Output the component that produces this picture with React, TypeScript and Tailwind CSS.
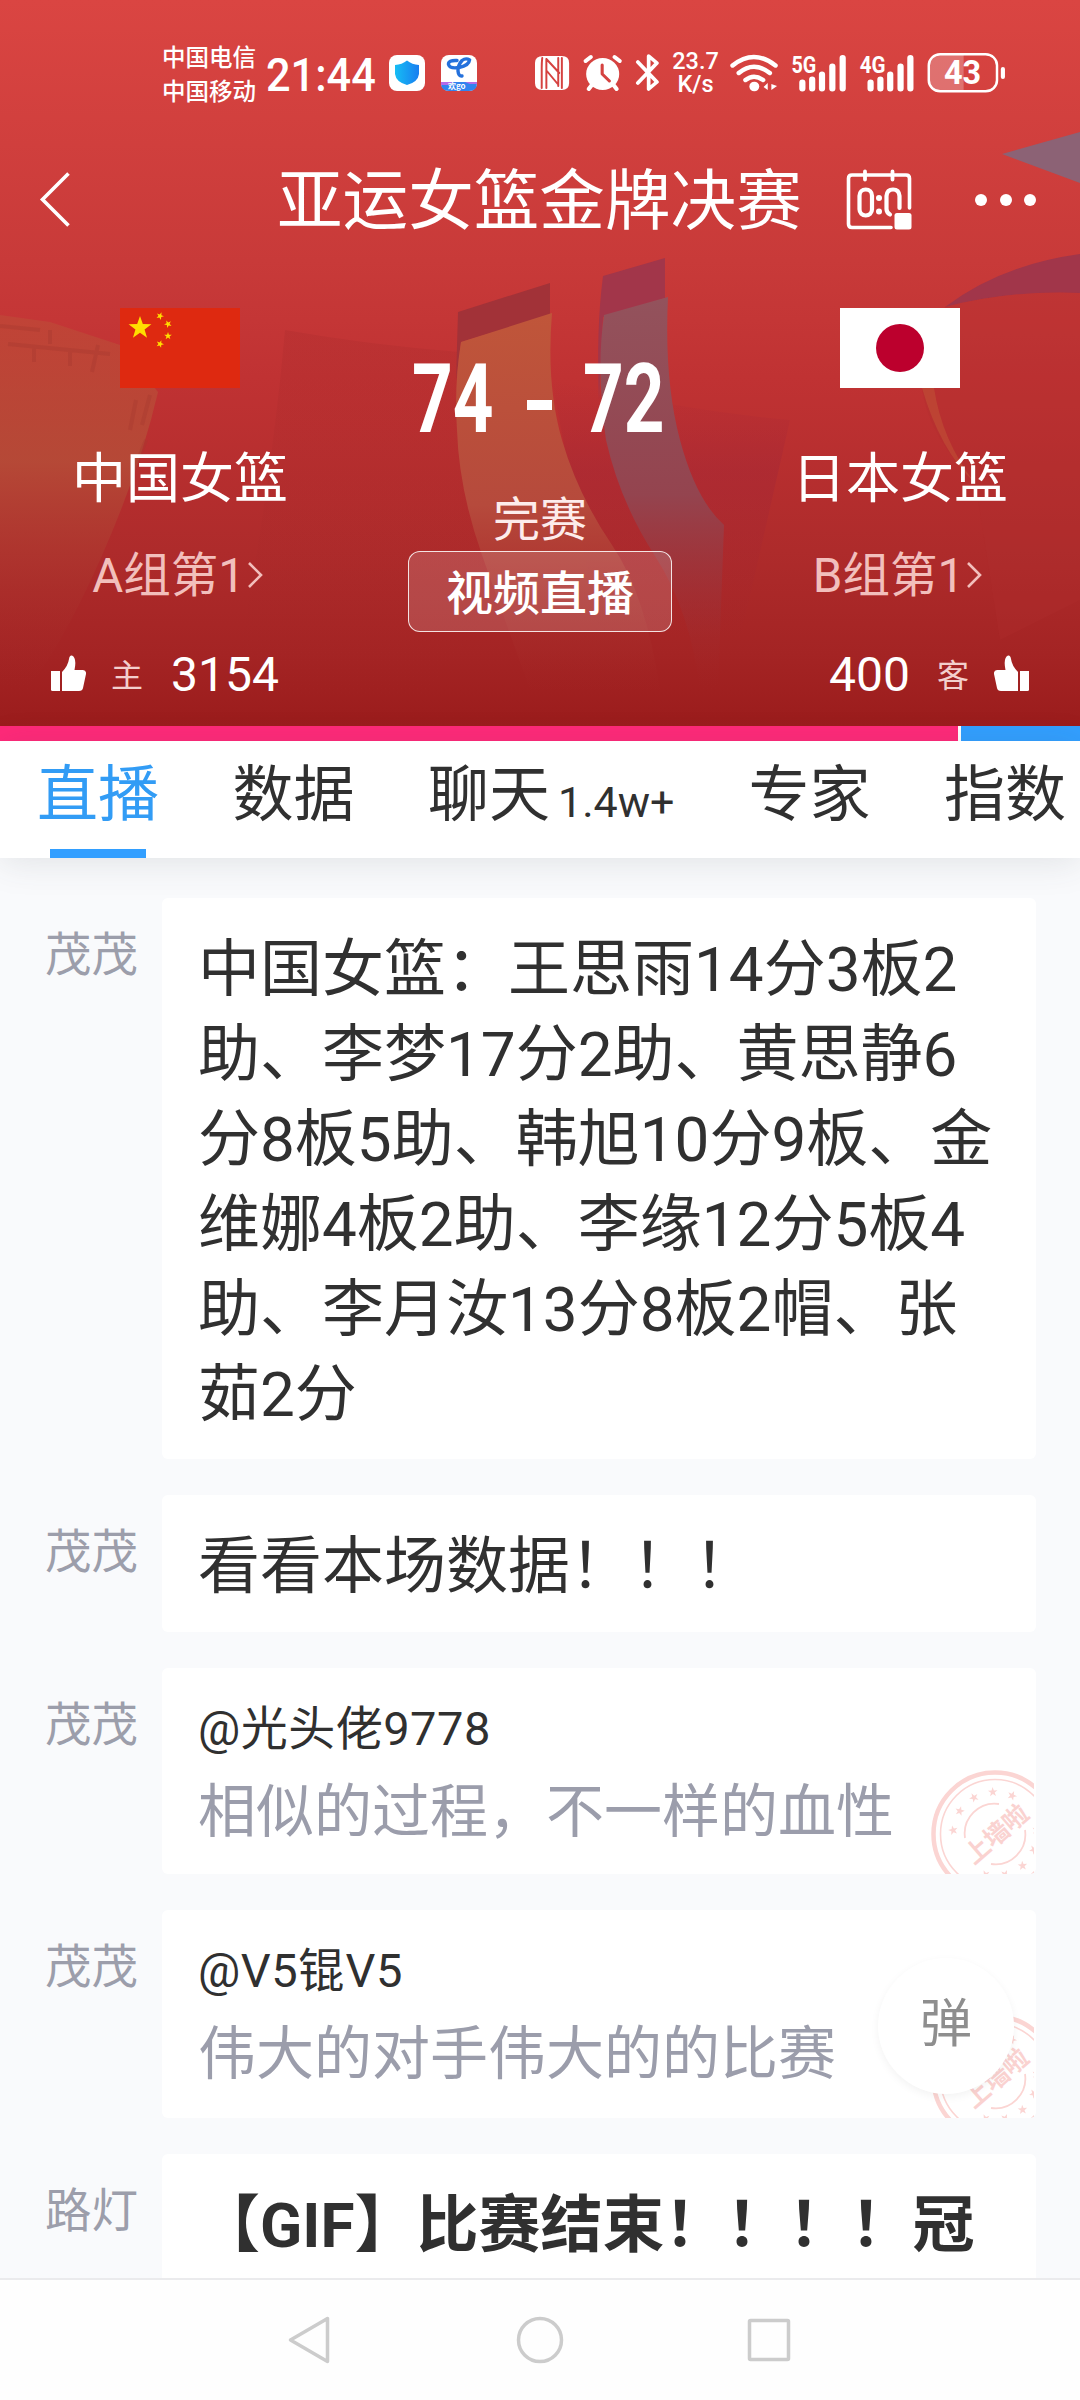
import type { ReactNode } from "react";

const TABS = [
    { label: "直播", active: true },
    { label: "数据" },
    { label: "聊天", count: "1.4w+" },
    { label: "专家" },
    { label: "指数" },
];

function cx(...c: Array<string | false | undefined | null>) {
    return c.filter(Boolean).join(" ");
}

export default function App() {
    return (
        <div className="relative flex h-[2400px] w-[1080px] flex-col overflow-hidden bg-white font-['Noto_Sans_CJK_SC',sans-serif] text-[#303030]">
            <header className="relative h-[726px] shrink-0 overflow-hidden bg-[linear-gradient(to_bottom,#da4542_0%,#c83a39_36%,#c03233_52%,#ae2b2b_76%,#a42424_90%,#9b1c1c_100%)] text-white">
                <HeaderArt />
                <div className="relative">
                    <StatusBar />
                    <TitleBar />
                    <div className="grid h-[387px] grid-cols-3">
                        <Team name="中国女篮" rank="A组第1" flag={<ChinaFlag />} />
                        <div className="flex flex-col items-center pt-[98px]">
                            <div className="flex h-24 items-center font-[Roboto,sans-serif] text-[96px] leading-none font-bold">
                                <span className="w-[83px] pl-px">
                                    <span className="inline-block origin-left scale-x-[0.74]">74</span>
                                </span>
                                <span className="mt-3 mr-[30px] ml-[33px] h-[10px] w-[25px] bg-white" />
                                <span className="w-[87px] pl-px">
                                    <span className="inline-block origin-left scale-x-[0.74]">72</span>
                                </span>
                            </div>
                            <div className="mt-[45px] text-[47px] leading-none text-[#fdeceb]">完赛</div>
                            <button className="mt-3 flex h-[81px] w-[264px] items-center justify-center rounded-xl border border-white/85 bg-white/15 pb-[4px] text-[47px] leading-none font-medium">
                                视频直播
                            </button>
                        </div>
                        <Team name="日本女篮" rank="B组第1" flag={<JapanFlag />} />
                    </div>
                    <div className="flex h-[66px] items-center justify-between px-[50px] leading-none">
                        <div className="flex items-center">
                            <Thumb />
                            <span className="ml-[25px] text-[32px] text-[#f3cfcd]">主</span>
                            <span className="ml-[28px] pt-[4px] font-[Roboto,sans-serif] text-[48px]">3154</span>
                        </div>
                        <div className="flex items-center">
                            <span className="pt-[4px] font-[Roboto,sans-serif] text-[48px]">400</span>
                            <span className="ml-[27px] text-[32px] text-[#f3cfcd]">客</span>
                            <Thumb className="ml-[25px] -scale-x-100" />
                        </div>
                    </div>
                </div>
            </header>

            {/* Support ratio */}
            <div className="flex h-[15px] shrink-0 gap-[3px]">
                <div className="w-[958px] bg-[#ff2979]" />
                <div className="flex-1 bg-[#329fff]" />
            </div>

            <nav className="relative z-10 flex h-[117px] shrink-0 bg-white pl-[37px] shadow-[0_4px_34px_rgba(60,70,80,0.13)]">
                {TABS.map((tab) => (
                    <div key={tab.label} className="mr-[73.5px] flex shrink-0 flex-col items-center">
                        <div className="flex h-[108px] items-start pt-[18px] leading-none">
                            <span className={cx("text-[61px]", tab.active && "text-[#329cf5]")}>{tab.label}</span>
                            {tab.count && (
                                <span className="ml-[8px] w-[117px] pt-[22px] font-[Roboto,sans-serif] text-[43px]">{tab.count}</span>
                            )}
                        </div>
                        {tab.active && <div className="h-[9px] w-24 bg-[#329fff]" />}
                    </div>
                ))}
            </nav>

            <main className="flex h-[1420px] shrink-0 flex-col gap-9 overflow-hidden bg-[#f9fafc] pt-[40px]">
                <Message author="茂茂" className="h-[561px] pr-[38px]">
                    中国女篮：王思雨14分3板2助、李梦17分2助、黄思静6分8板5助、韩旭10分9板、金维娜4板2助、李缘12分5板4助、李月汝13分8板2帽、张茹2分
                </Message>
                <Message author="茂茂" className="h-[137px]">
                    看看本场数据！！！
                </Message>
                <Message author="茂茂" className="h-[206px]">
                    <Reply user="@光头佬9778" text="相似的过程，不一样的血性" />
                </Message>
                <Message author="茂茂" className="h-[208px]">
                    <Reply user="@V5锟V5" text="伟大的对手伟大的的比赛" />
                </Message>
                <Message author="路灯" className="h-[200px] font-bold">
                    【GIF】比赛结束！！！！冠
                </Message>
            </main>

            <button className="absolute top-[1958px] left-[878px] z-10 flex h-[136px] w-[136px] items-center justify-center rounded-full bg-white pb-[12px] text-[52px] leading-none text-[#8e8e8e] shadow-[0_3px_8px_rgba(0,0,0,0.05)]">
                弹
            </button>

            <footer className="flex h-[122px] shrink-0 justify-center border-t-2 border-[#ebebed] bg-[#fefefe] pt-[35px]">
                <svg width="504" height="50" viewBox="288 2315 504 50" fill="none" stroke="#cccccc" strokeWidth="3.5" strokeLinejoin="round">
                    <path d="M290.5 2340 327.5 2318.500V2361.500Z" />
                    <circle cx="540" cy="2340" r="21.500" />
                    <rect x="749.5" y="2320.500" width="39" height="39" rx="1" />
                </svg>
            </footer>
        </div>
    );
}

function HeaderArt() {
    return (
        <svg className="absolute inset-0" width="1080" height="726" viewBox="0 0 1080 726">
            <defs>
                <linearGradient id="orange" x1="0" y1="310" x2="0" y2="700" gradientUnits="userSpaceOnUse">
                    <stop offset="0" stopColor="#c0563a" />
                    <stop offset="0.5" stopColor="#b64a3c" />
                    <stop offset="1" stopColor="#a32526" stopOpacity="0" />
                </linearGradient>
                <linearGradient id="mauve" x1="0" y1="300" x2="0" y2="690" gradientUnits="userSpaceOnUse">
                    <stop offset="0" stopColor="#93525c" />
                    <stop offset="0.5" stopColor="#94444f" />
                    <stop offset="1" stopColor="#a32526" stopOpacity="0" />
                </linearGradient>
                <linearGradient id="wall" x1="0" y1="310" x2="0" y2="690" gradientUnits="userSpaceOnUse">
                    <stop offset="0" stopColor="#bd5038" stopOpacity="0.5" />
                    <stop offset="0.4" stopColor="#b54d38" stopOpacity="0.85" />
                    <stop offset="1" stopColor="#a32526" stopOpacity="0" />
                </linearGradient>
                <linearGradient id="shade" x1="0" y1="330" x2="0" y2="700" gradientUnits="userSpaceOnUse">
                    <stop offset="0" stopColor="#a52a2b" stopOpacity="0.25" />
                    <stop offset="1" stopColor="#a32526" stopOpacity="0" />
                </linearGradient>
                <linearGradient id="between" x1="0" y1="380" x2="0" y2="640" gradientUnits="userSpaceOnUse">
                    <stop offset="0" stopColor="#9f2438" stopOpacity="0" />
                    <stop offset="0.35" stopColor="#9f2438" stopOpacity="0.35" />
                    <stop offset="1" stopColor="#9f2430" stopOpacity="0" />
                </linearGradient>
            </defs>
            <path d="M285 330Q370 345 460 352L500 600 420 700H230Q270 500 285 330Z" fill="url(#shade)" />
            <path d="M552 380Q680 410 790 420L740 640H600Z" fill="url(#between)" />
            <path d="M0 315 50 322 120 345 158 392Q140 470 100 560T20 700L0 710Z" fill="url(#wall)" />
            <path d="M0 326 40 330M8 344 110 354M50 330V344M34 346V362M70 350V366M98 345 92 372M150 395 142 425M146 440 134 470M136 400 130 430" stroke="#a83a30" strokeWidth="4" opacity="0.4" fill="none" />
            <path d="M458 312 550 283V315L461 342 456 380Z" fill="#a23238" />
            <path d="M461 342 552 313Q546 385 562 440T612 545 660 690H530Q505 620 482 555T457 430Q454 385 461 342Z" fill="url(#orange)" />
            <path d="M603 276 665 258V298L603 317 599 400Q596 330 603 276Z" fill="#a2364a" />
            <path d="M604 315 668 297Q664 380 680 440T724 525L718 690H700Q690 610 655 556T606 440Q596 370 604 315Z" fill="url(#mauve)" />
            <path d="M1002 154 1080 132V183Z" fill="#8c6275" />
            <path d="M945 307Q1000 265 1080 254V293Q1010 290 945 307Z" fill="#a1364a" />
            <path d="M945 307Q1010 290 1080 293V600L1000 640 975 480Q930 440 922 389Z" fill="#b0302f" opacity="0.3" />
            <path d="M922 388H934Q942 440 974 482 940 450 922 388Z" fill="#bf4c35" opacity="0.7" />
        </svg>
    );
}

function StatusBar() {
    return (
        <div className="flex h-[146px] items-center pl-[162px]">
            <div className="w-[104px] shrink-0 text-[23.5px] leading-[34px] font-medium">
                <div>中国电信</div>
                <div>中国移动</div>
            </div>
            <div className="w-[123px] shrink-0 pt-[3px] font-[Roboto,sans-serif] text-[46px] leading-none font-medium">
                <span className="inline-block origin-left scale-x-[0.94]">21:44</span>
            </div>
            <svg className="shrink-0" width="88" height="36" viewBox="389 56 88 36">
                <defs>
                    <linearGradient id="shield" x1="0" x2="1">
                        <stop stopColor="#16bdf4" />
                        <stop offset="1" stopColor="#187ef0" />
                    </linearGradient>
                </defs>
                <rect x="389" y="56" width="36" height="36" rx="8" fill="#fff" />
                <path d="M407 61.500Q412 65.500 419 66V75Q418 83 407 86 396 83 395 75V66Q402 65.500 407 61.500Z" fill="url(#shield)" />
                <rect x="441" y="56" width="36" height="36" rx="8" fill="#fff" />
                <path d="M441 83H477V84Q477 92 469 92H449Q441 92 441 84Z" fill="#3183ef" />
                <path d="M441 83H453L448 86H441ZM465 83H477V85H470Z" fill="#b46be8" />
                <path d="M457 61.500Q448 61 448.500 65.500 450 70 459 68.500 469 66.500 469.500 61 466 58.500 462 61.500 458 66 458 72 458.500 77.500 462 77" fill="none" stroke="#2471dc" strokeWidth="3.400" strokeLinecap="round" />
                <text x="448" y="89.500" fontSize="8" fontWeight="700" fill="#fff">
                    欢go
                </text>
            </svg>
            <svg className="ml-[58px] shrink-0" width="124" height="42" viewBox="534 52 120 42" preserveAspectRatio="none" fill="none" stroke="#fff" strokeLinecap="round" strokeLinejoin="round">
                {/* NFC */}
                <path d="M542 56H560Q567 56 567 63V83Q567 90 560 90H541Q534 90 534 83V63Q534 56 542 56Z" fill="#fff" stroke="none" />
                <path d="M541 58Q540.500 62 540.500 68V88M560 58V88M545 59 557.500 73M545.500 71 556 84M545 59V88M556.500 58V86" stroke="#d54240" strokeWidth="1.900" />
                {/* Alarm */}
                <circle cx="599.500" cy="74" r="16" fill="#fff" stroke="none" />
                <path d="M583 61 588 57M616 61 611 57M589 85 586 89M610 85 613 89" strokeWidth="4" />
                <path d="M599 65V74L606 81" stroke="#d54240" strokeWidth="3" />
                {/* Bluetooth */}
                <path d="M633.500 62 652 82 644 89V56L652 63 633.500 83" strokeWidth="3.600" />
            </svg>
            <div className="ml-[13px] w-[47px] shrink-0 text-center font-[Roboto,sans-serif] text-[23.5px] leading-[23px] font-medium">
                <div>23.7</div>
                <div>K/s</div>
            </div>
            <svg className="ml-[11px] shrink-0" width="276" height="44" viewBox="723 51 267 44" preserveAspectRatio="none" fill="none" stroke="#fff" strokeLinecap="round">
                <path d="M725.500 65.500Q746 48.500 767 65.500M731.500 73Q746 60.500 761.500 73M738 80Q746 73.500 755 80" strokeWidth="4.400" />
                <circle cx="746.500" cy="86.500" r="4.800" fill="#fff" stroke="none" />
                <path d="M755.500 87 759.500 83V90ZM763 84 768.500 86 763 90Z" fill="#fff" stroke="none" />
                <path d="M793 82.500V88.500M802.500 79.500V88.500M812 74.500V88.500M822 66.500V88.500M832 58V88.500" strokeWidth="6" />
                <path d="M859 82.500V88.500M868.500 79.500V88.500M878 74.500V88.500M888 66.500V88.500M897.500 58V88.500" strokeWidth="6" />
                <g fill="#fff" stroke="none" fontSize="24" fontWeight="700" fontFamily="Roboto, sans-serif">
                    <text x="782.500" y="73" textLength="24" lengthAdjust="spacingAndGlyphs">
                        5G
                    </text>
                    <text x="848.500" y="73" textLength="25" lengthAdjust="spacingAndGlyphs">
                        4G
                    </text>
                    <path d="M927 55H949V91H927Q916 91 916 80V66Q916 55 927 55Z" opacity="0.25" />
                    <text x="930" y="84.500" fontSize="33" textLength="36" lengthAdjust="spacingAndGlyphs">
                        43
                    </text>
                </g>
                <rect x="915.300" y="54.300" width="66" height="37" rx="11" strokeWidth="2.400" />
                <path d="M987 69V77" strokeWidth="4" />
            </svg>
        </div>
    );
}

function TitleBar() {
    return (
        <div className="flex h-[107px] items-center pl-[39px]">
            <svg width="34" height="60" viewBox="39 170 34 60" fill="none" stroke="#fff" strokeWidth="3.600">
                <path d="M68.500 173.500 42.500 199.500 68.500 225.500" />
            </svg>
            <h1 className="ml-[204px] w-[525px] pb-[7px] text-[65.6px] leading-none whitespace-nowrap">亚运女篮金牌决赛</h1>
            <svg className="ml-[44px]" width="66" height="64" viewBox="846 167 66 64" fill="none" stroke="#fff" strokeLinecap="round">
                <path d="M891 226.500H852Q848.500 226.500 848.500 223V177.500Q848.500 174 852 174H906Q909.500 174 909.500 177.500V207" strokeWidth="3.600" />
                <path d="M865 170.500V178.500M892.500 170.500V178.500" strokeWidth="3.800" />
                <rect x="859.500" y="188.500" width="12.500" height="26" rx="6.200" strokeWidth="4.200" />
                <path d="M890 213.500Q886.500 211.500 886.500 208V195Q887 188.500 893 188.500T899.500 195V207" strokeWidth="4.200" />
                <path d="M894.500 214.500Q894.500 212 897 212H909Q911.500 212 911.500 214.500V226Q911.500 228.500 909 228.500H897Q894.500 228.500 894.500 226Z" fill="#fff" stroke="none" />
                <circle cx="879" cy="197" r="3" fill="#fff" stroke="none" />
                <circle cx="879" cy="210.500" r="3" fill="#fff" stroke="none" />
            </svg>
            <div className="ml-[63px] flex gap-[12.5px]">
                <span className="h-3 w-3 rounded-full bg-white" />
                <span className="h-3 w-3 rounded-full bg-white" />
                <span className="h-3 w-3 rounded-full bg-white" />
            </div>
        </div>
    );
}

function Team({ name, rank, flag }: { name: string; rank: string; flag: ReactNode }) {
    return (
        <div className="flex flex-col items-center pt-[55px] leading-none">
            {flag}
            <div className="mt-[60px] text-[54px]">{name}</div>
            <div className="mt-[51px] mr-[3px] flex items-center font-[Roboto,'Noto_Sans_CJK_SC',sans-serif] text-[47.5px] text-[#f2bfbc]">
                {rank}
                <svg className="mb-[4px] ml-[2px]" width="18" height="34" viewBox="0 0 18 34" fill="none" stroke="currentColor" strokeWidth="2.600">
                    <path d="M2 5 14 17 2 29" />
                </svg>
            </div>
        </div>
    );
}

const STAR = "M0-10 2.350-3.240 9.510-3.090 3.800 1.240 5.880 8.090 0 4-5.880 8.090-3.800 1.240-9.510-3.090-2.350-3.240Z";

function ChinaFlag() {
    return (
        <svg width="120" height="80" viewBox="0 0 120 80">
            <rect width="120" height="80" fill="#de2910" />
            <g fill="#ffde00">
                <path d={STAR} transform="translate(20 20) scale(1.2)" />
                <path d={STAR} transform="translate(40 8) rotate(23) scale(0.4)" />
                <path d={STAR} transform="translate(48 16) rotate(46) scale(0.4)" />
                <path d={STAR} transform="translate(48 28) scale(0.4)" />
                <path d={STAR} transform="translate(40 36) rotate(20) scale(0.4)" />
            </g>
        </svg>
    );
}

function JapanFlag() {
    return (
        <div className="flex h-20 w-[120px] items-center justify-center bg-white">
            <div className="h-12 w-12 rounded-full bg-[#bc002d]" />
        </div>
    );
}

function Thumb({ className }: { className?: string }) {
    return (
        <svg className={className} width="36" height="36" viewBox="0 0 36 36" fill="#fff">
            <path d="M1 16H10V36H2.500Q1 36 1 34.500Z" />
            <path d="M12 17Q18 11 19 4 19.500 0 22 0.500 27 3 24.500 15H33Q36.500 15.500 36 19L33 33Q32.500 36 29 36H12Z" />
        </svg>
    );
}

function Message({ author, className, children }: { author: string; className?: string; children: ReactNode }) {
    return (
        <div className="flex shrink-0 pr-11">
            <div className="w-[162px] shrink-0 pt-[30px] pl-[45px] text-[46.5px] leading-none text-[#9c9eab]">{author}</div>
            <div
                className={cx(
                    "relative flex-1 overflow-hidden rounded-md bg-white pt-[29px] pl-[36px] font-[Roboto,'Noto_Sans_CJK_SC',sans-serif] text-[62px] leading-[85px]",
                    className
                )}
            >
                {children}
            </div>
        </div>
    );
}

function Reply({ user, text }: { user: string; text: string }) {
    return (
        <>
            <div className="mt-[8px] text-[47px] leading-none tracking-[0.5px]">{user}</div>
            <div className="mt-[31px] text-[58px] leading-none whitespace-nowrap text-[#9b9dab]">{text}</div>
            <Stamp />
        </>
    );
}

const STAMP_STARS = [-85, -57, -30, -3, 24, 85, 112, 139, 166, 193];

function Stamp() {
    return (
        <svg className="absolute right-[2px] bottom-0" width="104" height="104" viewBox="-65 -64 104 104" fill="none" stroke="#fbd5d3">
            <circle r="61.500" strokeWidth="4.500" />
            <circle r="54.500" strokeWidth="1.600" />
            <path d="M-30 4A30 30 0 0 1 4-30M30-4A30 30 0 0 1-4 30" strokeWidth="1.800" />
            {STAMP_STARS.map((deg) => (
                <path key={deg} d={STAR} transform={`rotate(${deg}) translate(0 -42) scale(0.5)`} fill="#fbd5d3" stroke="none" />
            ))}
            <text transform="rotate(-41)" x="1" y="10" textAnchor="middle" fontSize="25" fontWeight="700" fontFamily="Noto Sans CJK SC, sans-serif" fill="#fad2d0" stroke="none">
                上墙啦
            </text>
        </svg>
    );
}
